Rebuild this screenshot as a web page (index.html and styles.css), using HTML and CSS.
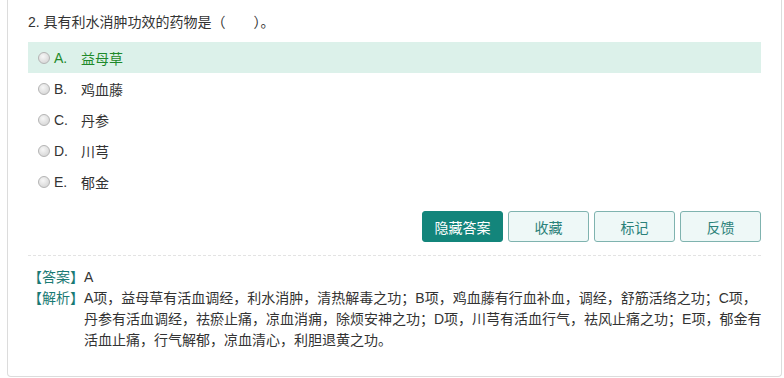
FILE: index.html
```html
<!DOCTYPE html>
<html lang="zh-CN">
<head>
    <meta charset="UTF-8">
    <title>题目</title>
    <link rel="stylesheet" href="styles.css">
</head>
<body>
    <div class="card">
        <div class="question">2. 具有利水消肿功效的药物是（　　）。</div>

        <ul class="options">
            <li class="option right"><span class="radio"></span><span class="letter">A.</span>益母草</li>
            <li class="option"><span class="radio"></span><span class="letter">B.</span>鸡血藤</li>
            <li class="option"><span class="radio"></span><span class="letter">C.</span>丹参</li>
            <li class="option"><span class="radio"></span><span class="letter">D.</span>川芎</li>
            <li class="option"><span class="radio"></span><span class="letter">E.</span>郁金</li>
        </ul>

        <div class="actions">
            <button class="btn primary">隐藏答案</button>
            <button class="btn">收藏</button>
            <button class="btn">标记</button>
            <button class="btn">反馈</button>
        </div>

        <div class="analysis">
            <div class="line"><span class="tag">【答案】</span><span>A</span></div>
            <div class="line"><span class="tag">【解析】</span><span class="body">A项，益母草有活血调经，利水消肿，清热解毒之功；B项，鸡血藤有行血补血，调经，舒筋活络之功；C项，丹参有活血调经，祛瘀止痛，凉血消痈，除烦安神之功；D项，川芎有活血行气，祛风止痛之功；E项，郁金有活血止痛，行气解郁，凉血清心，利胆退黄之功。</span></div>
        </div>
    </div>
</body>
</html>
```

FILE: styles.css
```css
*{
    margin: 0;
    padding: 0;
    box-sizing: border-box;
}
body{
    background: #fff;
    font-family: "Liberation Sans", "Noto Sans CJK SC", sans-serif;
    font-size: 14px;
    color: #333;
}
.card{
    margin: 0 2px 0 7px;
    height: 377px;
    border: 1px solid #dcdcdc;
    border-top: 0;
    border-radius: 0 0 4px 4px;
    padding: 11px 20px 0 20px;
}
.question{
    height: 22px;
    line-height: 22px;
    margin-bottom: 9px;
}
.options{
    list-style: none;
}
.option{
    display: flex;
    align-items: center;
    height: 31px;
    padding-left: 10px;
}
.option.right{
    background: #dcf1ea;
    color: #1f8a2a;
}
.radio{
    width: 12px;
    height: 12px;
    border-radius: 50%;
    border: 1px solid #b4b4b4;
    background: radial-gradient(circle at 40% 35%, #f7f7f7, #cfcfcf);
    margin-right: 4px;
}
.letter{
    width: 27px;
}
.actions{
    display: flex;
    justify-content: flex-end;
    gap: 5px;
    margin-top: 14px;
    padding-bottom: 13px;
    border-bottom: 1px dashed #e3e3e3;
}
.btn{
    width: 81px;
    height: 31px;
    border: 1px solid #7fb3af;
    border-radius: 3px;
    background: #eef8f7;
    color: #2a8179;
    font-family: inherit;
    font-size: 14px;
}
.btn.primary{
    background: #13857b;
    border-color: #13857b;
    color: #fff;
}
.analysis{
    padding-top: 11px;
    line-height: 21px;
}
.line{
    display: flex;
}
.tag{
    color: #1a7a74;
    flex: none;
    width: 56px;
}
.body{
    flex: 1;
    margin-right: -5px;
}
```
